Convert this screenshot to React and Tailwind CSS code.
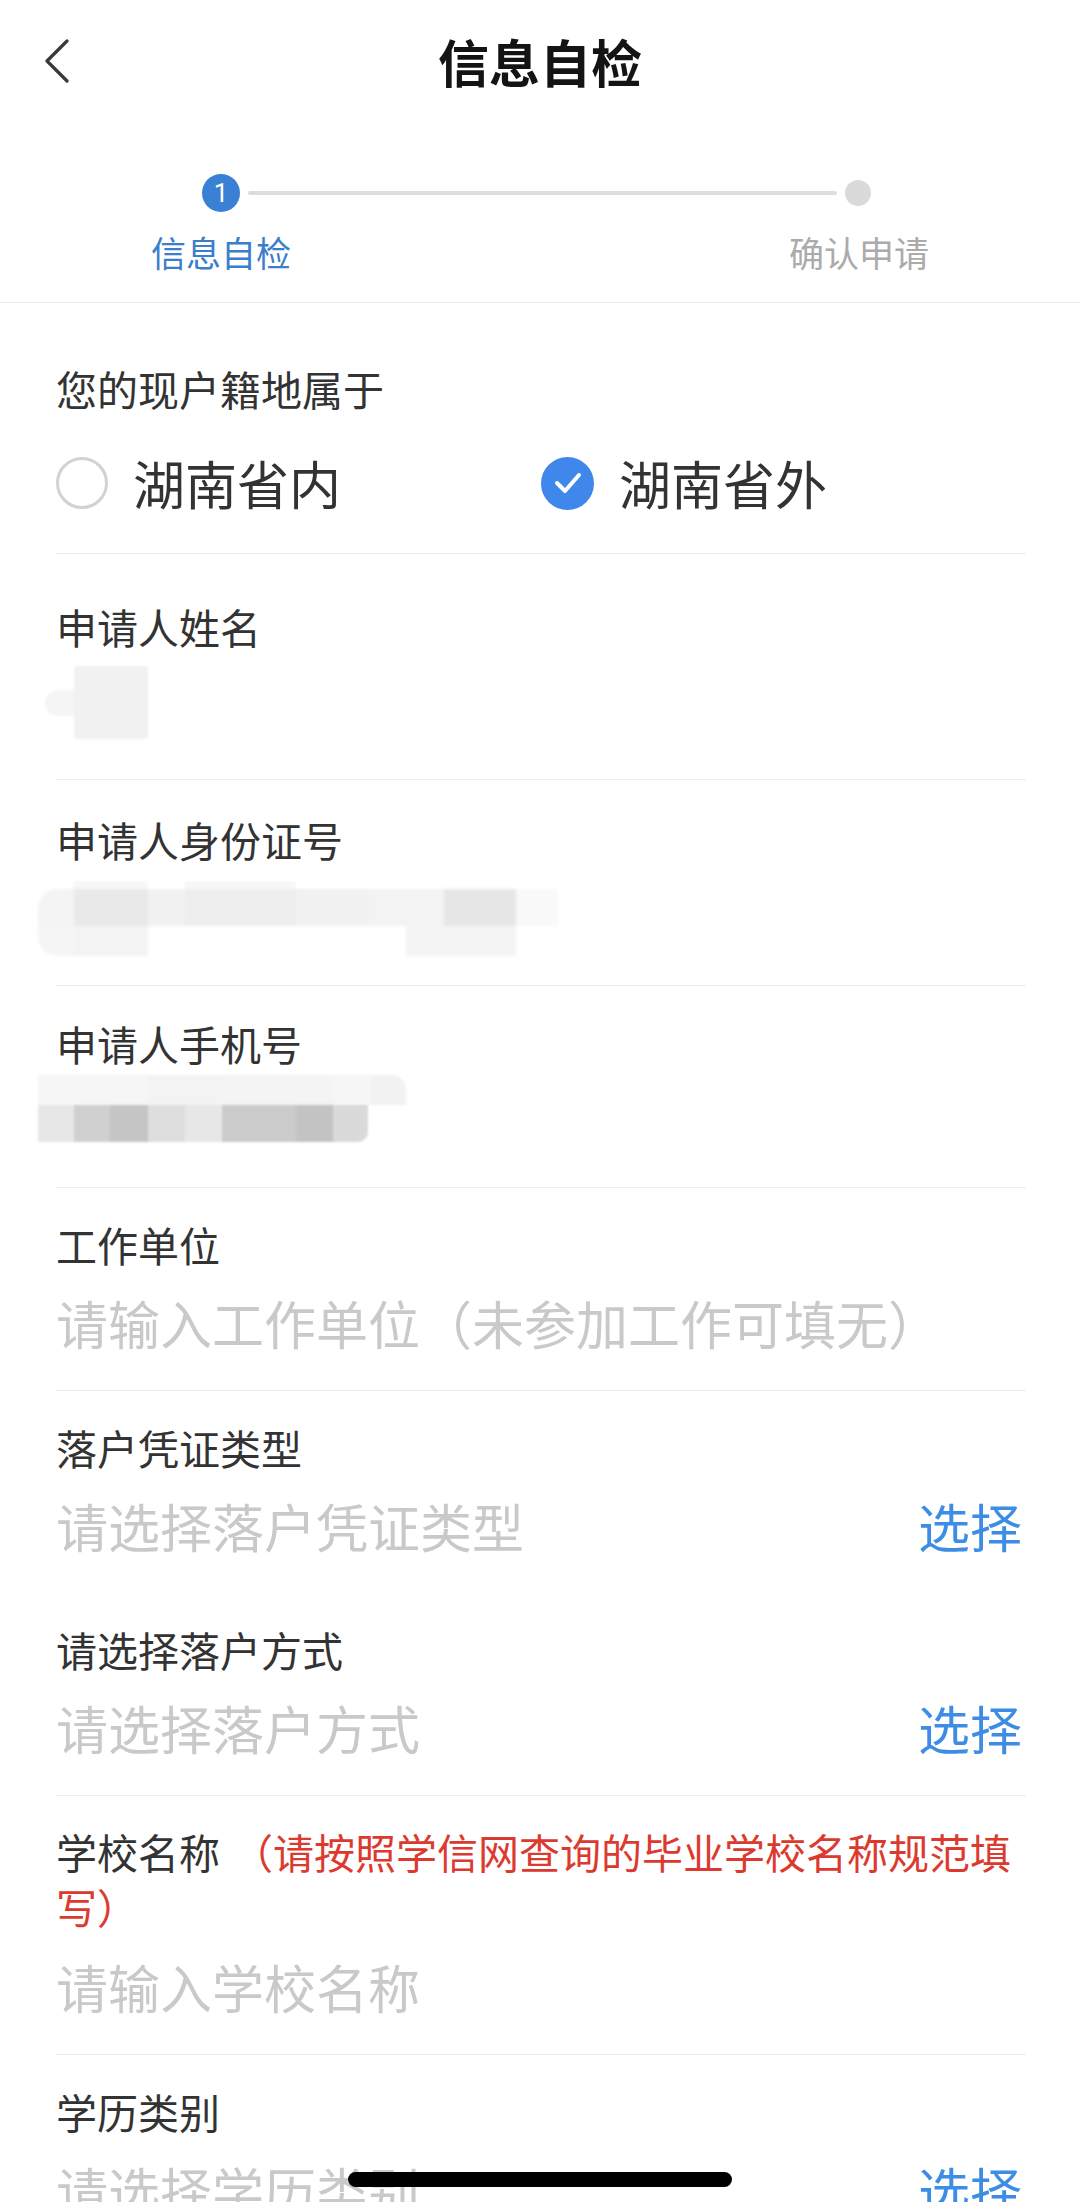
const font = "font-['PingFang_SC','Noto_Sans_CJK_SC',sans-serif]";

function SelectRow({ label, placeholder, border = true }) {
  return (
    <div className={border ? "pt-[28px] pb-[37px] border-b border-[#ececec]" : "pt-[28px] pb-[37px]"}>
      <div className="text-[41px] leading-[56px] text-[#333]">{label}</div>
      <div className="mt-[21px] flex items-center justify-between">
        <span className="text-[52px] leading-[60px] text-[#c9c9c9]">{placeholder}</span>
        <span className="text-[52px] leading-[60px] text-[#3c8de3] mr-[4px]">选择</span>
      </div>
    </div>
  );
}

function InputRow({ label, placeholder }) {
  return (
    <div className="pt-[28px] pb-[37px] border-b border-[#ececec]">
      <div className="text-[41px] leading-[56px] text-[#333]">{label}</div>
      <input
        readOnly
        placeholder={placeholder}
        className="mt-[21px] block w-full text-[52px] leading-[60px] h-[60px] outline-none placeholder:text-[#c9c9c9] text-[#333]"
      />
    </div>
  );
}

function Cell({ w, h, c, extra = "" }) {
  return <div className={`${w} ${h} ${c} ${extra}`} />;
}

export default function App() {
  return (
    <div className={`relative min-h-screen bg-white ${font}`}>
      {/* nav bar */}
      <div className="grid grid-cols-[1fr_auto_1fr] items-center h-[122px]">
        <div className="pl-[44px]">
          <svg width="26" height="44" viewBox="0 0 26 44" fill="none">
            <polyline points="23,2 3,22 23,42" stroke="#3a3a3a" strokeWidth="3.2" strokeLinecap="round" strokeLinejoin="round" />
          </svg>
        </div>
        <div className="text-[51px] font-bold text-[#141414] leading-none">信息自检</div>
        <div />
      </div>

      {/* stepper */}
      <div className="border-b border-[#ececec] pb-[30px]">
        <div className="mt-[52px] flex items-center pl-[202px] pr-[209px]">
          <div className="w-[38px] h-[38px] rounded-full bg-[#3a80d4] flex items-center justify-center text-white text-[26px] leading-none font-['Roboto',sans-serif]">
            1
          </div>
          <div className="flex-1 h-[4px] bg-[#dddddd] mx-[8px] rounded-full" />
          <div className="w-[26px] h-[26px] rounded-full bg-[#dadada]" />
        </div>
        <div className="mt-[20px] flex justify-between px-[151px] text-[35px] leading-[40px]">
          <span className="text-[#3b7ecb]">信息自检</span>
          <span className="text-[#ababab]">确认申请</span>
        </div>
      </div>

      {/* form */}
      <div className="pl-[56px] pr-[54px]">
        {/* household */}
        <div className="pt-[57px] pb-[40px] border-b border-[#ececec]">
          <div className="text-[41px] leading-[56px] text-[#333]">您的现户籍地属于</div>
          <div className="mt-[37px] grid grid-cols-2 h-[60px] items-center">
            <div className="flex items-center gap-[25px]">
              <div className="w-[52px] h-[52px] rounded-full border-[3px] border-[#d2d2d2]" />
              <span className="text-[52px] leading-[60px] text-[#333]">湖南省内</span>
            </div>
            <div className="flex items-center gap-[25px]">
              <div className="w-[53px] h-[53px] rounded-full bg-[#3f87ea] flex items-center justify-center">
                <svg width="30" height="24" viewBox="0 0 30 24" fill="none">
                  <polyline points="4,12 12,20 26,4" stroke="white" strokeWidth="4" strokeLinecap="round" strokeLinejoin="round" />
                </svg>
              </div>
              <span className="text-[52px] leading-[60px] text-[#333]">湖南省外</span>
            </div>
          </div>
        </div>

        {/* name */}
        <div className="pt-[44px] pb-[40px] border-b border-[#ececec]">
          <div className="text-[41px] leading-[56px] text-[#333]">申请人姓名</div>
          <div className="mt-[12px] -ml-[11px] flex items-center blur-[1px]">
            <Cell w="w-[29px]" h="h-[26px]" c="bg-[#f5f5f5]" extra="rounded-l-full" />
            <Cell w="w-[74px]" h="h-[73px]" c="bg-[#f1f1f1]" extra="rounded-[4px]" />
          </div>
        </div>

        {/* id */}
        <div className="pt-[31px] pb-[29px] border-b border-[#ececec]">
          <div className="text-[41px] leading-[56px] text-[#333]">申请人身份证号</div>
          <div className="mt-[14px] -ml-[18px] flex flex-col blur-[1.5px]">
            <div className="flex h-[8px]">
              <Cell w="w-[36px]" h="h-[8px]" c="bg-white" />
              <Cell w="w-[74px]" h="h-[8px]" c="bg-[#f7f7f7]" />
              <Cell w="w-[37px]" h="h-[8px]" c="bg-white" />
              <Cell w="w-[111px]" h="h-[8px]" c="bg-[#f7f7f7]" />
            </div>
            <div className="flex h-[37px]">
              <Cell w="w-[36px]" h="h-[37px]" c="bg-[#f4f4f4]" extra="rounded-tl-[20px]" />
              <Cell w="w-[74px]" h="h-[37px]" c="bg-[#e9e9e9]" />
              <Cell w="w-[37px]" h="h-[37px]" c="bg-[#f1f1f1]" />
              <Cell w="w-[111px]" h="h-[37px]" c="bg-[#eeeeee]" />
              <Cell w="w-[72px]" h="h-[37px]" c="bg-[#f1f1f1]" />
              <Cell w="w-[76px]" h="h-[37px]" c="bg-[#f3f3f3]" />
              <Cell w="w-[72px]" h="h-[37px]" c="bg-[#e6e6e6]" />
              <Cell w="w-[42px]" h="h-[37px]" c="bg-[#f9f9f9]" />
            </div>
            <div className="flex h-[30px]">
              <Cell w="w-[36px]" h="h-[30px]" c="bg-[#f5f5f5]" extra="rounded-bl-[20px]" />
              <Cell w="w-[74px]" h="h-[30px]" c="bg-[#f3f3f3]" />
              <Cell w="w-[258px]" h="h-[30px]" c="bg-white" />
              <Cell w="w-[110px]" h="h-[30px]" c="bg-[#f4f4f4]" />
            </div>
          </div>
        </div>

        {/* phone */}
        <div className="pt-[29px] pb-[45px] border-b border-[#ececec]">
          <div className="text-[41px] leading-[56px] text-[#333]">申请人手机号</div>
          <div className="mt-[4px] -ml-[18px] flex flex-col blur-[1px]">
            <div className="flex h-[30px]">
              <Cell w="w-[110px]" h="h-[30px]" c="bg-[#f6f6f6]" />
              <Cell w="w-[75px]" h="h-[30px]" c="bg-[#f3f3f3]" />
              <Cell w="w-[111px]" h="h-[30px]" c="bg-[#f4f4f4]" />
              <Cell w="w-[37px]" h="h-[30px]" c="bg-[#f6f6f6]" />
              <Cell w="w-[35px]" h="h-[30px]" c="bg-[#f2f2f2]" extra="rounded-tr-[14px]" />
            </div>
            <div className="flex h-[37px]">
              <Cell w="w-[36px]" h="h-[37px]" c="bg-[#e7e7e7]" />
              <Cell w="w-[36px]" h="h-[37px]" c="bg-[#d0d0d0]" />
              <Cell w="w-[38px]" h="h-[37px]" c="bg-[#c5c5c5]" />
              <Cell w="w-[37px]" h="h-[37px]" c="bg-[#dedede]" />
              <Cell w="w-[37px]" h="h-[37px]" c="bg-[#e7e7e7]" />
              <Cell w="w-[74px]" h="h-[37px]" c="bg-[#cbcbcb]" />
              <Cell w="w-[37px]" h="h-[37px]" c="bg-[#c3c3c3]" />
              <Cell w="w-[35px]" h="h-[37px]" c="bg-[#dadada]" extra="rounded-br-[10px]" />
            </div>
          </div>
        </div>

        <InputRow label="工作单位" placeholder="请输入工作单位（未参加工作可填无）" />
        <SelectRow label="落户凭证类型" placeholder="请选择落户凭证类型" border={false} />
        <SelectRow label="请选择落户方式" placeholder="请选择落户方式" />

        {/* school */}
        <div className="pt-[28px] pb-[37px] border-b border-[#ececec]">
          <div className="text-[41px] leading-[55px] text-[#333]">
            学校名称<span className="ml-[12px] text-[#dc3a2f]">（请按照学信网查询的毕业学校名称规范填写）</span>
          </div>
          <input
            readOnly
            placeholder="请输入学校名称"
            className="mt-[23px] block w-full text-[52px] leading-[60px] h-[60px] outline-none placeholder:text-[#c9c9c9] text-[#333]"
          />
        </div>

        <SelectRow label="学历类别" placeholder="请选择学历类别" />
      </div>

      {/* home indicator */}
      <div className="fixed bottom-[15px] left-1/2 -translate-x-1/2 w-[384px] h-[15px] rounded-full bg-black" />
    </div>
  );
}
